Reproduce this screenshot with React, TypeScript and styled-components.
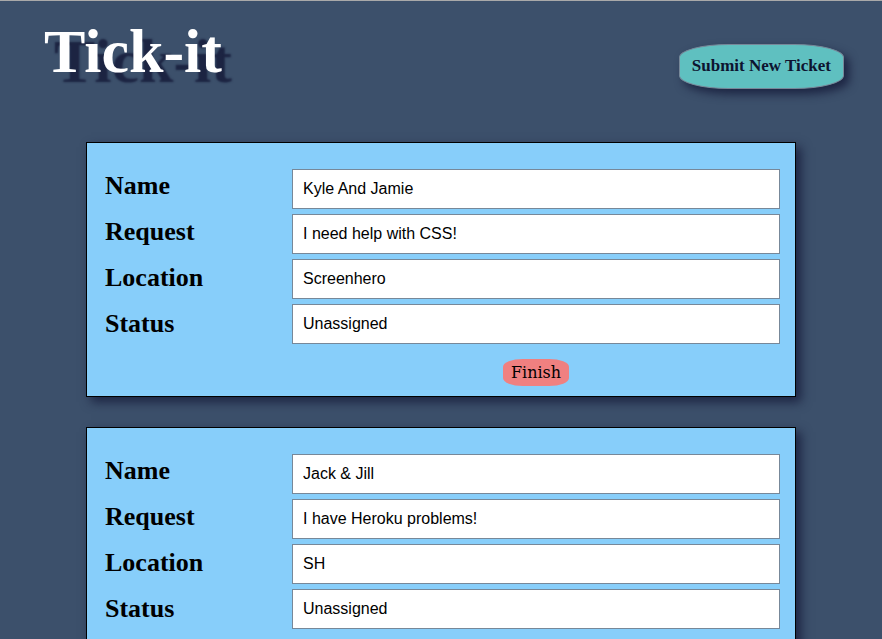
import React from "react";
import styled, { createGlobalStyle } from "styled-components";

const GlobalStyle = createGlobalStyle`
  * { box-sizing: border-box; }
  body {
    margin: 0;
    background: #3c506b;
    color: #000;
    font-family: "Liberation Serif", serif;
  }
`;

const Page = styled.div`
  border-top: 1px solid #a9a9a9;
`;

const Header = styled.header`
  display: flex;
  justify-content: space-between;
  align-items: flex-start;
  height: 141px;
  padding: 16px 38px 0 44px;
`;

const Title = styled.h1`
  margin: 0;
  color: #fff;
  font-size: 62px;
  line-height: 68px;
  font-weight: 700;
  text-shadow: 10px 10px 2px #1c2442;
`;

const SubmitButton = styled.button`
  height: 45px;
  margin-top: 27px;
  padding: 0 12px 2px;
  border: 1px solid #778899;
  border-radius: 30%;
  background: #5fc0c0;
  box-shadow: 5px 5px 10px #1c2442;
  color: #0d1430;
  font: 700 17px/20px "Liberation Serif", serif;
`;

const TicketList = styled.main`
  display: flex;
  flex-direction: column;
  gap: 30px;
  padding: 0 86px 30px;
`;

const Card = styled.form`
  display: grid;
  grid-template-columns: 187px 1fr;
  padding: 26px 15px 10px 18px;
  border: 1px solid #000;
  background: #87cefa;
  box-shadow: 5px 5px 10px #1c2442;
`;

const Labels = styled.div`
  display: flex;
  flex-direction: column;
  gap: 16px;
  padding-top: 2px;
`;

const Label = styled.label`
  font-size: 26px;
  line-height: 30px;
  font-weight: 700;
`;

const Fields = styled.div`
  display: flex;
  flex-direction: column;
  gap: 5px;
`;

const Field = styled.input`
  width: 100%;
  height: 40px;
  padding: 0 10px;
  border: 1px solid #778899;
  border-radius: 0;
  background: #fff;
  color: #000;
  font: 16px/20px "Liberation Sans", sans-serif;
`;

const FinishButton = styled.button`
  align-self: center;
  height: 27px;
  margin-top: 10px;
  padding: 0 8px;
  border: 0;
  border-radius: 30%;
  background: #f08080;
  color: #000;
  font: 16px/20px "DejaVu Serif", serif;
`;

const fieldNames = ["Name", "Request", "Location", "Status"] as const;
type Ticket = Record<(typeof fieldNames)[number], string>;

const tickets: Ticket[] = [
  { Name: "Kyle And Jamie", Request: "I need help with CSS!", Location: "Screenhero", Status: "Unassigned" },
  { Name: "Jack & Jill", Request: "I have Heroku problems!", Location: "SH", Status: "Unassigned" },
];

function TicketCard({ ticket, id }: { ticket: Ticket; id: number }) {
  return (
    <Card>
      <Labels>
        {fieldNames.map((name) => (
          <Label key={name} htmlFor={`${name}-${id}`}>{name}</Label>
        ))}
      </Labels>
      <Fields>
        {fieldNames.map((name) => (
          <Field key={name} id={`${name}-${id}`} type="text" defaultValue={ticket[name]} />
        ))}
        <FinishButton type="button">Finish</FinishButton>
      </Fields>
    </Card>
  );
}

export default function App() {
  return (
    <Page>
      <GlobalStyle />
      <Header>
        <Title>Tick-it</Title>
        <SubmitButton type="button">Submit New Ticket</SubmitButton>
      </Header>
      <TicketList>
        {tickets.map((ticket, i) => (
          <TicketCard key={ticket.Name} ticket={ticket} id={i} />
        ))}
      </TicketList>
    </Page>
  );
}
